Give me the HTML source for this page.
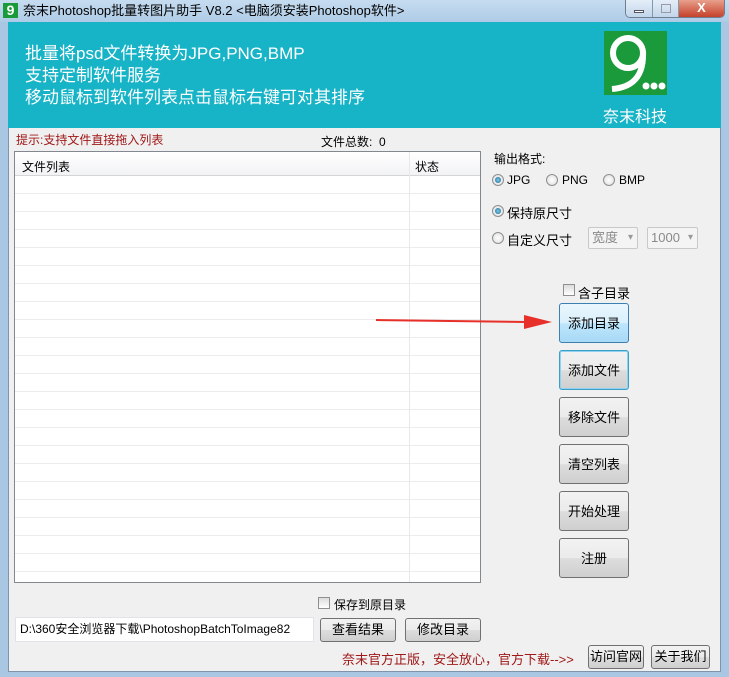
<!DOCTYPE html>
<html><head><meta charset="utf-8"><style>
*{margin:0;padding:0;box-sizing:border-box}
body{width:729px;height:677px;overflow:hidden;background:#a9c6e2;font-family:"Liberation Sans","Noto Sans CJK SC",sans-serif;font-size:12px;color:#000;position:relative}
.abs{position:absolute}
.title{left:0;top:0;width:729px;height:22px;background:linear-gradient(#c6dcf0,#aecbe6)}
.client{left:8px;top:22px;width:713px;height:650px;background:#f0f0f0;border:1px solid #7f93aa}
.banner{left:8px;top:22px;width:713px;height:106px;background:#17b3c6}
.btxt{color:#fff;font-size:17px;line-height:22px}
.btn{position:absolute;left:559px;width:70px;height:40px;border:1px solid #707070;border-radius:3px;background:linear-gradient(#f2f2f2 0,#ebebeb 50%,#dddddd 51%,#cfcfcf 100%);text-align:center;line-height:40px;font-size:13px}
.sbtn{position:absolute;height:24px;border:1px solid #707070;border-radius:3px;background:linear-gradient(#f2f2f2 0,#ebebeb 50%,#dddddd 51%,#cfcfcf 100%);text-align:center;line-height:22px;font-size:13px}
.radio{position:absolute;width:12px;height:12px;border-radius:50%;border:1px solid #8e8f8f;background:radial-gradient(#fff,#dcdcdc)}
.radio.on::after{content:"";position:absolute;left:2px;top:2px;width:6px;height:6px;border-radius:50%;background:radial-gradient(#7ad0f0,#1c5f87)}
.chk{position:absolute;width:12px;height:12px;border:1px solid #8e8f8f;background:linear-gradient(#dcdcdc,#fff)}
.sel{position:absolute;height:22px;border:1px solid #c9c9c9;border-radius:2px;background:#f4f4f4;color:#8a8a8a;font-size:13px;line-height:20px;padding-left:3px}
.sel::after{content:"▾";position:absolute;right:4px;top:0;color:#999;font-size:10px}
</style></head><body>
<div class="abs title"></div>
<div class="abs" style="left:3px;top:3px;width:15px;height:15px;background:#1a9b3a;color:#fff;font-weight:bold;font-size:14px;line-height:15px;text-align:center">9</div>
<div class="abs" style="left:23px;top:2px;font-size:13px;line-height:17px">奈末Photoshop批量转图片助手 V8.2 &lt;电脑须安装Photoshop软件&gt;</div>
<div class="abs" style="left:625px;top:0;width:100px;height:18px;border:1px solid #6f7f93;border-top:none;border-radius:0 0 5px 5px;overflow:hidden;display:flex">
 <div style="width:27px;background:linear-gradient(#e4eef8,#c2d5ea);border-right:1px solid #8397ad;position:relative"><div style="position:absolute;left:8px;top:10px;width:10px;height:3px;background:#fff;border:1px solid #556"></div></div>
 <div style="width:26px;background:linear-gradient(#e4eef8,#c2d5ea);border-right:1px solid #8397ad;position:relative"><div style="position:absolute;left:8px;top:4px;width:10px;height:9px;border:1px solid #99a"></div></div>
 <div style="flex:1;background:linear-gradient(#e8a08c,#c5412b);color:#fff;font-weight:bold;text-align:center;line-height:16px;font-size:13px">X</div>
</div>
<div class="abs client"></div>
<div class="abs banner"></div>
<div class="abs btxt" style="left:25px;top:43px">批量将psd文件转换为JPG,PNG,BMP</div>
<div class="abs btxt" style="left:25px;top:65px">支持定制软件服务</div>
<div class="abs btxt" style="left:25px;top:87px">移动鼠标到软件列表点击鼠标右键可对其排序</div>
<div class="abs" style="left:604px;top:31px;width:63px;height:64px;background:#1b9a3b;overflow:hidden">
 <svg width="63" height="64" viewBox="0 0 63 64"><circle cx="24" cy="22" r="15" fill="none" stroke="#fff" stroke-width="6"/><path d="M39 20 C40 42 32 56 8 58" fill="none" stroke="#fff" stroke-width="6"/><circle cx="42" cy="55" r="3.5" fill="#fff"/><circle cx="50" cy="55" r="3.5" fill="#fff"/><circle cx="58" cy="55" r="3.5" fill="#fff"/></svg>
</div>
<div class="abs" style="left:603px;top:103px;color:#fff;font-size:16px">奈末科技</div>
<div class="abs" style="left:16px;top:131px;color:#a01818;font-size:12px">提示:支持文件直接拖入列表</div>
<div class="abs" style="left:321px;top:133px;font-size:12px">文件总数:&nbsp;&nbsp;0</div>
<div class="abs" style="left:14px;top:151px;width:467px;height:432px;border:1px solid #828790;background:#fff;overflow:hidden">
 <div style="position:absolute;left:0;top:0;width:465px;height:24px;background:linear-gradient(#fff,#f2f3f5);border-bottom:1px solid #d5d5d5"></div>
 <div style="position:absolute;left:7px;top:6px">文件列表</div>
 <div style="position:absolute;left:400px;top:6px">状态</div>
 <div style="position:absolute;left:0;top:24px;width:465px;height:410px;background:repeating-linear-gradient(#fff 0,#fff 17px,#ececec 17px,#ececec 18px)"></div>
 <div style="position:absolute;left:394px;top:0;width:1px;height:430px;background:#e8e8e8"></div>
</div>
<div class="abs" style="left:494px;top:150px">输出格式:</div>
<div class="radio on" style="left:492px;top:174px"></div><div class="abs" style="left:507px;top:173px">JPG</div>
<div class="radio" style="left:546px;top:174px"></div><div class="abs" style="left:562px;top:173px">PNG</div>
<div class="radio" style="left:603px;top:174px"></div><div class="abs" style="left:619px;top:173px">BMP</div>
<div class="radio on" style="left:492px;top:205px"></div><div class="abs" style="left:507px;top:203px;font-size:13px">保持原尺寸</div>
<div class="radio" style="left:492px;top:232px"></div><div class="abs" style="left:507px;top:230px;font-size:13px">自定义尺寸</div>
<div class="sel" style="left:588px;top:227px;width:50px">宽度</div>
<div class="sel" style="left:647px;top:227px;width:51px">1000</div>
<div class="chk" style="left:563px;top:284px"></div><div class="abs" style="left:578px;top:283px;font-size:13px">含子目录</div>
<svg class="abs" style="left:376px;top:312px" width="176" height="20"><line x1="0" y1="8" x2="150" y2="10" stroke="#e8302a" stroke-width="2"/><polygon points="148,3 176,10 148,17" fill="#e8302a"/></svg>
<div class="btn" style="top:303px;background:linear-gradient(#eaf6fd,#d9f0fc 50%,#bee6fd 51%,#a7d9f5);border-color:#3c7fb1">添加目录</div>
<div class="btn" style="top:350px;border-color:#3c9fc9;box-shadow:inset 0 0 0 1px #8fd3f0">添加文件</div>
<div class="btn" style="top:397px">移除文件</div>
<div class="btn" style="top:444px">清空列表</div>
<div class="btn" style="top:491px">开始处理</div>
<div class="btn" style="top:538px">注册</div>
<div class="chk" style="left:318px;top:597px"></div><div class="abs" style="left:334px;top:596px;font-size:12px">保存到原目录</div>
<div class="abs" style="left:15px;top:617px;width:299px;height:25px;background:#fff;border:1px solid #e2e3ea;padding:3px 4px;font-size:12px;line-height:17px">D:\360安全浏览器下载\PhotoshopBatchToImage82</div>
<div class="sbtn" style="left:320px;top:618px;width:76px">查看结果</div>
<div class="sbtn" style="left:405px;top:618px;width:76px">修改目录</div>
<div class="abs" style="left:342px;top:649px;color:#a01818;font-size:13px">奈末官方正版，安全放心，官方下载--&gt;&gt;</div>
<div class="sbtn" style="left:588px;top:645px;width:56px">访问官网</div>
<div class="sbtn" style="left:651px;top:645px;width:59px">关于我们</div>
</body></html>
